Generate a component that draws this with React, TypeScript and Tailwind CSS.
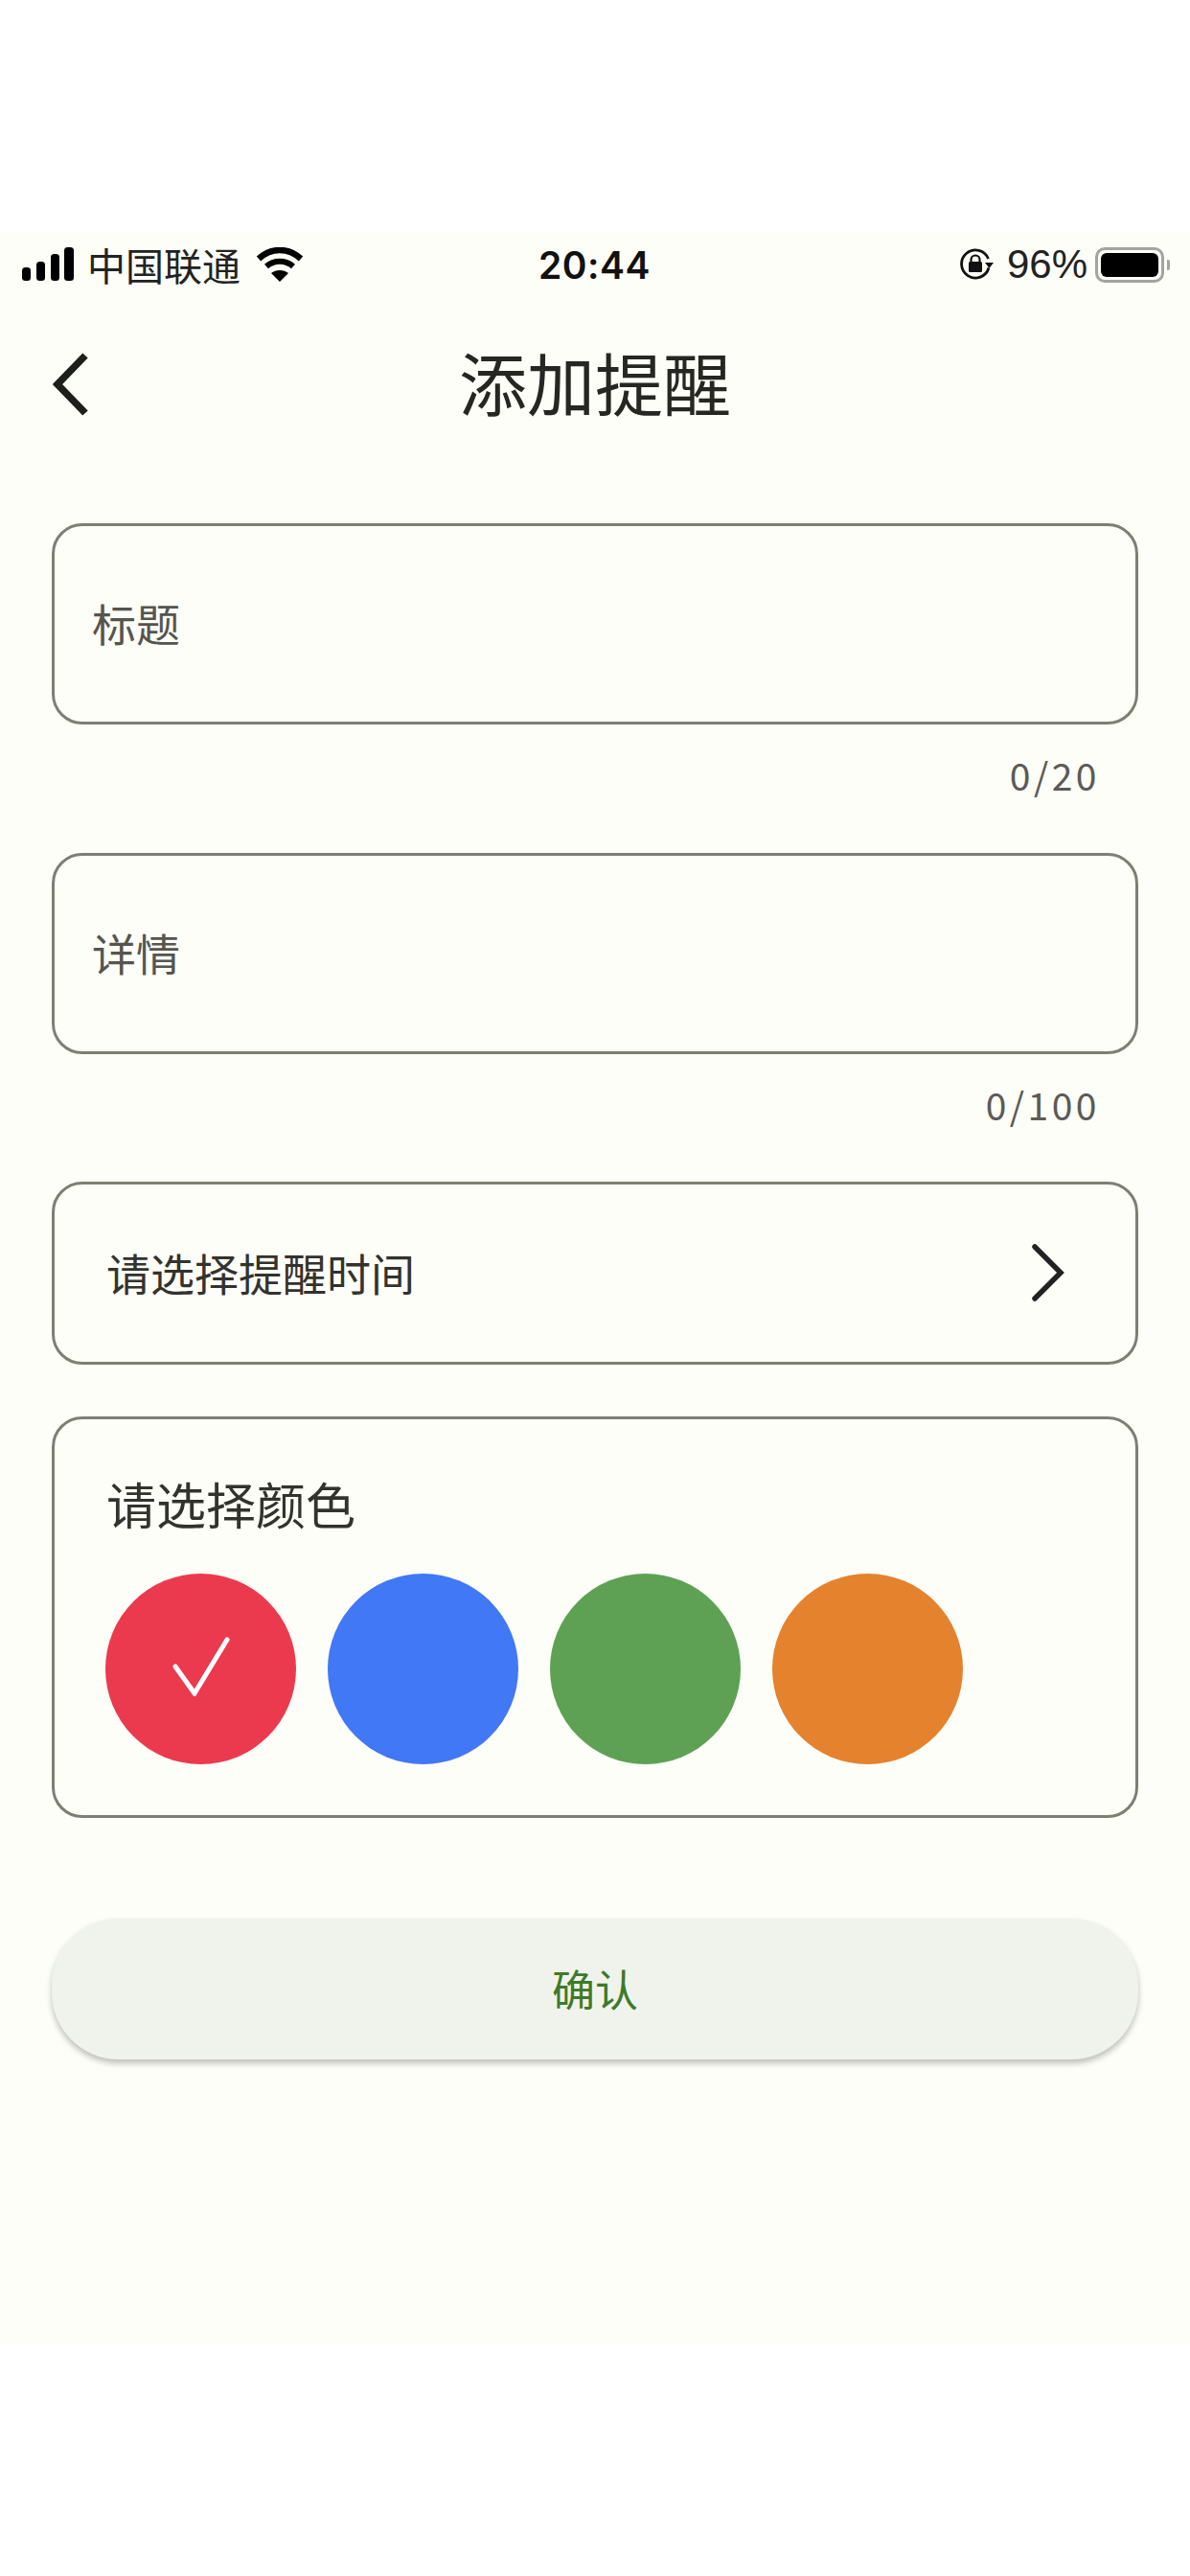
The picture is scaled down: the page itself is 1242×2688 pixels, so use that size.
const Signal = () => (
  <svg width="54" height="36" viewBox="0 0 54 36" className="block">
    <rect x="0" y="21" width="9" height="14" rx="3.5" fill="#000" />
    <rect x="15" y="15" width="9" height="20" rx="3.5" fill="#000" />
    <rect x="30" y="7" width="9" height="28" rx="3.5" fill="#000" />
    <rect x="44" y="0" width="10" height="35" rx="3.5" fill="#000" />
  </svg>
);

const Wifi = () => (
  <svg width="50" height="36" viewBox="0 0 50 36" className="block" fill="none">
    <path d="M3 12C16 0 34 0 47 12" stroke="#000" strokeWidth="6.500" />
    <path d="M11 20C19 13 31 13 39 20" stroke="#000" strokeWidth="6" />
    <path d="M16 27C21 23 29 23 34 27L25 36Z" fill="#000" />
  </svg>
);

const RotationLock = () => (
  <svg width="36" height="34" viewBox="0 0 36 34" className="block" fill="none">
    <path d="M31 20.500A14.500 14.500 0 1 1 30.500 11" stroke="#111" strokeWidth="2.800" />
    <path d="M27 15h9l-4.500 6z" fill="#111" />
    <path d="M12.500 15v-3a4.500 4.500 0 0 1 9 0v3" stroke="#111" strokeWidth="2.200" />
    <rect x="10" y="14" width="14" height="11" rx="1.500" fill="#111" />
  </svg>
);

const Battery = () => (
  <div className="flex items-center gap-[3px]">
    <div className="flex h-[37px] w-[72px] items-center justify-center rounded-[10px] border-[3px] border-[#a3a3a0]">
      <div className="h-[25px] w-[60px] rounded-[6px] bg-black" />
    </div>
    <div className="h-[11px] w-[3px] rounded-r-[2px] bg-[#a3a3a0]" />
  </div>
);

const Counter = ({ text }: { text: string }) => (
  <div className="mt-[36px] h-[32px] pr-[40px] text-right text-[39px] leading-[32px] tracking-[3.500px] text-[#5b5b58]">{text}</div>
);

const Field = ({ label }: { label: string }) => (
  <div className="flex h-[210px] items-center rounded-[32px] border-[3px] border-[#7d7f73] pb-[3px] pl-[39px] text-[46px] text-[#55554f]">
    {label}
  </div>
);

export default function App() {
  const font = { fontFamily: '"Noto Sans CJK SC", "Noto Sans", sans-serif' };
  return (
    <div className="min-h-[2688px] bg-white pt-[242px]" style={font}>
      <div className="h-[2203px] bg-[#fefef8] px-[54px]">
        <div className="-mx-[54px] flex h-[68px] items-center justify-between pl-[23px] pr-[21px]">
          <div className="flex items-center">
            <Signal />
            <span className="ml-[14px] text-[40px] leading-none text-[#222]">中国联通</span>
            <span className="ml-[16px]"><Wifi /></span>
          </div>
          <div className="absolute left-[562px] text-[39px] font-semibold leading-none tracking-[0.500px] text-[#111]" style={{ fontFamily: 'Inter, sans-serif' }}>
            20:44
          </div>
          <div className="flex items-center">
            <RotationLock />
            <span className="ml-[14px] text-[42px] leading-none text-[#222]" style={{ fontFamily: '"Liberation Sans", sans-serif' }}>96%</span>
            <span className="ml-[8px]"><Battery /></span>
          </div>
        </div>

        <div className="relative flex h-[180px] items-center justify-center pb-[5px]">
          <svg width="40" height="66" viewBox="0 0 40 66" className="absolute left-[1px] top-[58px]" fill="none">
            <path d="M34 3 5 33l29 30" stroke="#1d1f1a" strokeWidth="7.500" />
          </svg>
          <h1 className="text-[71px] font-normal leading-none text-[#262622]">添加提醒</h1>
        </div>

        <div className="mt-[56px]">
          <Field label="标题" />
          <Counter text="0/20" />
        </div>
        <div className="mt-[66px]">
          <Field label="详情" />
          <Counter text="0/100" />
        </div>

        <div className="mt-[65px] flex h-[191px] items-center justify-between rounded-[32px] border-[3px] border-[#7d7f73] pb-[2px] pl-[54px] pr-[74px]">
          <span className="text-[46px] text-[#33332e]">请选择提醒时间</span>
          <svg width="36" height="62" viewBox="0 0 36 62" fill="none">
            <path d="M5 4 32 31 5 58" stroke="#222" strokeWidth="5.500" strokeLinecap="round" />
          </svg>
        </div>

        <div className="mt-[54px] h-[419px] rounded-[32px] border-[3px] border-[#7d7f73] pl-[53px] pt-[50px]">
          <div className="pl-[1px] text-[52px] leading-[76px] text-[#33332e]">请选择颜色</div>
          <div className="mt-[35px] flex gap-[33px]">
            <div className="flex h-[199px] w-[199px] items-center justify-center rounded-full bg-[#eb3a4e]">
              <svg width="60" height="62" viewBox="0 0 60 62" fill="none" className="mb-[6px]">
                <path d="M3 31 23 59 57 3" stroke="#fff" strokeWidth="5" strokeLinecap="round" />
              </svg>
            </div>
            <div className="h-[199px] w-[199px] rounded-full bg-[#4078f6]" />
            <div className="h-[199px] w-[199px] rounded-full bg-[#5ea155]" />
            <div className="h-[199px] w-[199px] rounded-full bg-[#e4822e]" />
          </div>
        </div>

        <div className="mt-[105px] flex h-[147px] items-center justify-center rounded-[70px] bg-[#f0f3ec] pb-[2px] text-[45px] text-[#3d7a2a] shadow-[0_4px_6px_rgba(0,0,0,0.25)]">
          确认
        </div>
      </div>
    </div>
  );
}
